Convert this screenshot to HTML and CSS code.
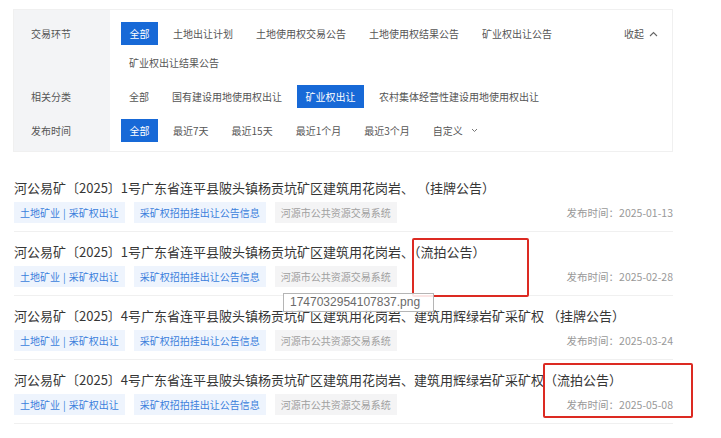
FILE: index.html
```html
<!DOCTYPE html>
<html lang="zh-CN">
<head>
<meta charset="utf-8">
<title>交易信息</title>
<link rel="stylesheet" href="styles.css">
</head>
<body>
<div class="page">
  <div class="filter">
    <div class="frow">
      <div class="flabel">交易环节</div>
      <div class="fbody">
        <div class="opts">
          <span class="opt active">全部</span>
          <span class="opt">土地出让计划</span>
          <span class="opt">土地使用权交易公告</span>
          <span class="opt">土地使用权结果公告</span>
          <span class="opt">矿业权出让公告</span>
          <span class="opt">矿业权出让结果公告</span>
        </div>
        <span class="collapse">收起<svg width="9" height="6" viewBox="0 0 9 6"><path d="M1 5 L4.5 1.5 L8 5" fill="none" stroke="#666" stroke-width="1.1"/></svg></span>
      </div>
    </div>
    <div class="frow">
      <div class="flabel">相关分类</div>
      <div class="fbody">
        <div class="opts">
          <span class="opt">全部</span>
          <span class="opt">国有建设用地使用权出让</span>
          <span class="opt active">矿业权出让</span>
          <span class="opt">农村集体经营性建设用地使用权出让</span>
        </div>
      </div>
    </div>
    <div class="frow">
      <div class="flabel">发布时间</div>
      <div class="fbody">
        <div class="opts">
          <span class="opt active">全部</span>
          <span class="opt">最近7天</span>
          <span class="opt">最近15天</span>
          <span class="opt">最近1个月</span>
          <span class="opt">最近3个月</span>
          <span class="opt">自定义<svg class="down" width="7" height="5" viewBox="0 0 7 5"><path d="M1 1 L3.5 3.5 L6 1" fill="none" stroke="#777" stroke-width="1"/></svg></span>
        </div>
      </div>
    </div>
  </div>

  <ul class="list">
    <li class="item">
      <div class="title">河公易矿〔2025〕1号广东省连平县陂头镇杨贡坑矿区建筑用花岗岩、 （挂牌公告）</div>
      <div class="meta">
        <div class="tags">
          <span class="tag">土地矿业<span class="pipe">|</span>采矿权出让</span>
          <span class="tag">采矿权招拍挂出让公告信息</span>
          <span class="tag grey">河源市公共资源交易系统</span>
        </div>
        <span class="date">发布时间：2025-01-13</span>
      </div>
    </li>
    <li class="item">
      <div class="title">河公易矿〔2025〕1号广东省连平县陂头镇杨贡坑矿区建筑用花岗岩、（流拍公告）</div>
      <div class="meta">
        <div class="tags">
          <span class="tag">土地矿业<span class="pipe">|</span>采矿权出让</span>
          <span class="tag">采矿权招拍挂出让公告信息</span>
          <span class="tag grey">河源市公共资源交易系统</span>
        </div>
        <span class="date">发布时间：2025-02-28</span>
      </div>
    </li>
    <li class="item">
      <div class="title">河公易矿〔2025〕4号广东省连平县陂头镇杨贡坑矿区建筑用花岗岩、建筑用辉绿岩矿采矿权 （挂牌公告）</div>
      <div class="meta">
        <div class="tags">
          <span class="tag">土地矿业<span class="pipe">|</span>采矿权出让</span>
          <span class="tag">采矿权招拍挂出让公告信息</span>
          <span class="tag grey">河源市公共资源交易系统</span>
        </div>
        <span class="date">发布时间：2025-03-24</span>
      </div>
    </li>
    <li class="item">
      <div class="title">河公易矿〔2025〕4号广东省连平县陂头镇杨贡坑矿区建筑用花岗岩、建筑用辉绿岩矿采矿权（流拍公告）</div>
      <div class="meta">
        <div class="tags">
          <span class="tag">土地矿业<span class="pipe">|</span>采矿权出让</span>
          <span class="tag">采矿权招拍挂出让公告信息</span>
          <span class="tag grey">河源市公共资源交易系统</span>
        </div>
        <span class="date">发布时间：2025-05-08</span>
      </div>
    </li>
  </ul>

  <div class="mark mark-a"></div>
  <div class="mark mark-b"></div>
  <div class="filetip">1747032954107837.png</div>
</div>
</body>
</html>
```

FILE: styles.css
```css
* { box-sizing: border-box; }
html, body { margin: 0; padding: 0; background: #fff; }
body {
  font-family: "Noto Sans CJK SC", "Noto Sans", sans-serif;
  color: #333;
}
.page {
  position: relative;
  width: 721px;
  height: 438px;
  overflow: hidden;
  padding-top: 9px;
}
.filter {
  margin-left: 13px;
  width: 660px;
  padding: 12px 0 9px;
  border: 1px solid #f0f0f0;
  background: linear-gradient(to right, #f3f4f6 96px, #fff 96px);
  display: flex;
  flex-direction: column;
  gap: 11px;
  font-size: 10px;
}
.frow {
  display: grid;
  grid-template-columns: 96px 1fr;
}
.flabel {
  padding-left: 17px;
  line-height: 23px;
  color: #555;
}
.fbody {
  display: flex;
  align-items: flex-start;
  padding-left: 11px;
  padding-right: 14px;
}
.opts {
  flex: 1;
  display: flex;
  flex-wrap: wrap;
  column-gap: 7px;
  row-gap: 6px;
}
.opt {
  display: inline-flex;
  align-items: center;
  height: 23px;
  padding: 0 8px;
  color: #555;
  white-space: nowrap;
}
.opt.active {
  background: #1769d7;
  color: #fff;
  padding: 0 8.5px;
}
.down { margin-left: 8px; }
.collapse {
  display: inline-flex;
  align-items: center;
  gap: 5px;
  height: 23px;
  color: #555;
  margin-left: 40px;
}

.list {
  list-style: none;
  margin: 16px 0 0 14px;
  padding: 0;
  width: 659px;
}
.item {
  padding: 10px 0 8px;
  border-bottom: 1px solid #f0f0f0;
  height: 64px;
}
.title {
  font-size: 13px;
  line-height: 20px;
  color: #363636;
  white-space: nowrap;
}
.meta {
  margin-top: 4px;
  display: flex;
  align-items: center;
  justify-content: space-between;
}
.tags {
  display: flex;
  gap: 9px;
}
.tag {
  display: inline-flex;
  align-items: center;
  height: 21px;
  padding: 0 6px;
  font-size: 10px;
  background: #eef4fd;
  color: #3b7fdc;
  white-space: nowrap;
}
.pipe { margin: 0 3px; }
.tag.grey {
  background: #f4f4f5;
  color: #a0a0a0;
}
.date {
  font-size: 10.5px;
  color: #999;
}

.mark {
  position: absolute;
  border: 2px solid #dc2a22;
  border-radius: 2px;
}
.mark-a { left: 412px; top: 238px; width: 117px; height: 59px; }
.mark-b { left: 543px; top: 363px; width: 150px; height: 55px; }
.filetip {
  position: absolute;
  left: 283px;
  top: 293px;
  width: 151px;
  height: 19px;
  border: 1px solid #b5b5b5;
  background: rgba(255,255,255,0.88);
  font-family: "Liberation Sans", Arial, sans-serif;
  font-size: 12px;
  line-height: 17px;
  padding-left: 6px;
  color: #6a6a6a;
}
```
